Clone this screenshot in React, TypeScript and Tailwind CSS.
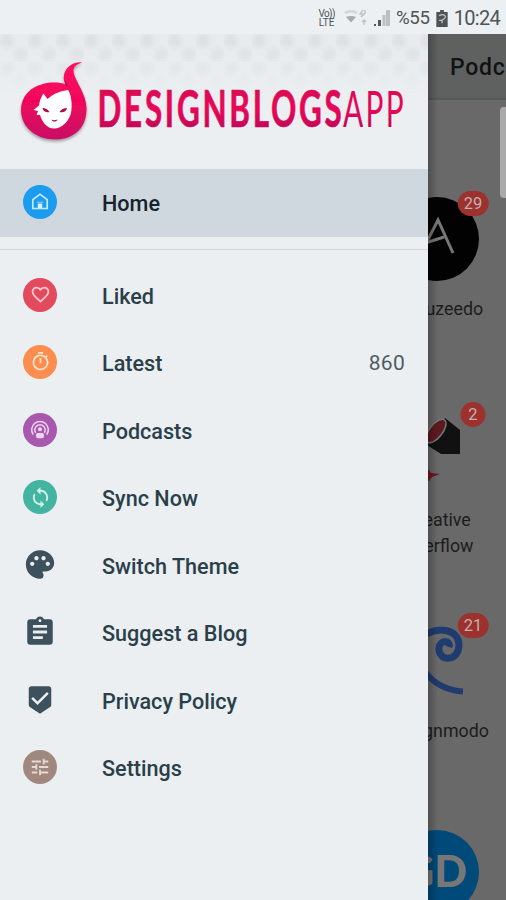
import type { ReactNode } from 'react';
import { MdAssignment, MdBeenhere, MdFavoriteBorder, MdOutlineTimer, MdPalette, MdSync, MdTune } from 'react-icons/md';
import clsx from 'clsx';

const HomeIcon = () => (
  <svg width="20" height="20" viewBox="0 0 20 20" fill="none" stroke="#c5e9fd" strokeWidth="1.7">
    <path d="M2.8 16.500V7.600L10 2.400l7.200 5.200V16.500Z" />
    <path d="M7.800 16.500v-5h4.400v5" fill="#d5f0ff" stroke="none" />
    <path d="M6.800 10.200h6.400" strokeWidth="1" opacity="0.7" />
  </svg>
);

const PodcastIcon = () => (
  <svg width="20" height="20" viewBox="0 0 20 20" fill="none" stroke="#efd3f1" strokeWidth="1.500" strokeLinecap="round">
    <path d="M3 14.200a8.300 8.300 0 1 1 14 0" />
    <path d="M5.400 12.300a5.200 5.200 0 1 1 9.200 0" />
    <circle cx="10" cy="9.300" r="2" fill="#efd3f1" stroke="none" />
    <rect x="6.800" y="13.800" width="6.400" height="3.600" rx="1" fill="#efd3f1" />
  </svg>
);

interface MenuItem {
  label: string;
  icon: ReactNode;
  color?: string;
  count?: number;
}

const menu: MenuItem[] = [
  { label: 'Liked', icon: <MdFavoriteBorder size={21} />, color: 'bg-[#e44a5e] text-[#fbc9cf]' },
  { label: 'Latest', icon: <MdOutlineTimer size={21} className="-mt-[2px]" />, color: 'bg-[#fb8d4e] text-[#ffe3cf]', count: 860 },
  { label: 'Podcasts', icon: <PodcastIcon />, color: 'bg-[#a859ae]' },
  { label: 'Sync Now', icon: <MdSync size={23} />, color: 'bg-[#43b4a1] text-[#d0f1ea]' },
  { label: 'Switch Theme', icon: <MdPalette size={37} /> },
  { label: 'Suggest a Blog', icon: <MdAssignment size={34} /> },
  { label: 'Privacy Policy', icon: <MdBeenhere size={30} /> },
  { label: 'Settings', icon: <MdTune size={22} />, color: 'bg-[#a1887f] text-[#e6d8d2]' },
];

const MenuRow = ({ item, active }: { item: MenuItem; active?: boolean }) => (
  <li className={clsx('flex h-[67.5px] items-center pr-[23px] pl-[23px]', active && 'bg-[#cfd8df]')}>
    <span className={clsx('mb-px flex size-[34px] shrink-0 items-center justify-center rounded-full', item.color ?? 'text-[#3c515c]')}>
      {item.icon}
    </span>
    <span className={clsx('ml-[45px] flex-1 pt-[3px] text-[21.6px] font-medium', active ? 'text-[#14242c]' : 'text-[#2a3f49]')}>
      {item.label}
    </span>
    {item.count && <span className="pt-[2px] text-[21px] tracking-[0.3px] text-[#4f5c63]">{item.count}</span>}
  </li>
);

const Logo = () => (
  <svg width="428" height="135" viewBox="0 34 428 135" className="relative block">
    <defs>
      <linearGradient id="pink" x1="0" y1="0" x2="0" y2="1">
        <stop offset="0" stopColor="#ff0a5c" />
        <stop offset="0.5" stopColor="#f0065c" />
        <stop offset="1" stopColor="#c80f66" />
      </linearGradient>
      <linearGradient id="word" gradientUnits="userSpaceOnUse" x1="0" y1="89" x2="0" y2="128">
        <stop offset="0" stopColor="#d90c52" />
        <stop offset="0.5" stopColor="#ea0656" />
        <stop offset="1" stopColor="#c2085a" />
      </linearGradient>
      <filter id="shade" x="-20%" y="-20%" width="140%" height="140%">
        <feDropShadow dx="0" dy="2" stdDeviation="1.5" floodOpacity="0.35" />
      </filter>
    </defs>
    <g filter="url(#shade)">
      <path
        d="M82 62.500C75 61.500 66 66 64 75C63.300 79 64 81.500 65.500 84.500C60 82 50 82 43 84C30 87 21 97 21 110C21 128 37 140 56 139.500C76 139 87 126 86.500 108C86 93 75 81 73.500 72C73 67 76 64.500 82 62.500Z"
        fill="url(#pink)"
      />
      <path d="M64.500 78C65 84 70 86 71 91C71 88 68.500 86.500 65.500 84.500Z" fill="#b00843" />
    </g>
    <path
      d="M43.500 93.500L47.500 99C54 93 61 91 68 90C71.500 95 72.500 105 71 113C69 121 62 128.500 54 128.500C47 128.500 42 122 40 115L36.500 115L38 111L33.500 110L39 105.500C39.500 101 41 97 43.500 93.500Z"
      fill="#fff"
    />
    <path
      d="M42.500 108C45 108 48 109.500 49.500 112C46 113 43 111 42.500 108ZM59.500 112C61 109.500 64 108 67 108C66.500 111.500 63 113 59.500 112ZM51.500 119.500C53 120.500 55 120.500 57.500 119.500C56.500 122.300 52.500 122.300 51.500 119.500Z"
      fill="#a90d50"
    />
    <g fill="url(#word)" fontFamily="Lato, sans-serif" fontSize="51">
      <text
        x="97.500"
        y="126.500"
        fontWeight="700"
        letterSpacing="4.500"
        textLength="247"
        lengthAdjust="spacingAndGlyphs"
        stroke="url(#word)"
        strokeWidth="0.7"
        strokeLinejoin="round"
      >
        DESIGNBLOGS
      </text>
      <text x="343" y="126.500" fontWeight="400" letterSpacing="4" textLength="63" lengthAdjust="spacingAndGlyphs">
        APP
      </text>
    </g>
  </svg>
);

const StatusBar = () => (
  <header className="flex h-[34px] items-center justify-end bg-[#ecf0f3] pt-[2px] pr-[6px] text-[#505355]">
    <div className="mr-[8px] flex flex-col items-center text-[10px] leading-[9px]">
      <span className="tracking-[-0.6px]">Vo))</span>
      <span>LTE</span>
    </div>
    <svg width="25" height="18" viewBox="0 0 25 18" fill="none" className="mr-[5px]">
      <path d="M1 3q7-4 14 0l-2 2q-5-3-10 0Z" fill="#d2d5d7" />
      <path d="M3 8q5-2 10 0L8 13.500Z" fill="#a6aaad" />
      <path d="M20 1l-3 4h4l-3 3M21 11v5m-2-3l2-2 2 2M22 1v4" stroke="#c0c4c6" strokeWidth="1.500" />
    </svg>
    <svg width="18" height="18" viewBox="0 0 18 18" className="mr-[5px]">
      <path d="M1 15h2v2H1ZM5 11h3v6H5Z" fill="#55595b" />
      <path d="M9.500 6h3v11h-3ZM13 1h4v16h-4Z" fill="#bcc0c3" />
    </svg>
    <span className="text-[18.7px] tracking-[-0.3px]">%55</span>
    <svg width="12" height="17" viewBox="0 0 12 18" className="mx-[6px]">
      <path d="M4 0h4v2h4v16H0V2h4Z" fill="#505355" />
      <path d="M3 6q4-2 6 0t-3 5H3m3-1v4" fill="none" stroke="#c3c7ca" strokeWidth="1.300" />
    </svg>
    <span className="text-[20px] tracking-[-0.7px]">10:24</span>
  </header>
);

const Feed = ({ name, count, children }: { name: string; count?: number; children: ReactNode }) => (
  <div className="flex h-[211px] shrink-0 flex-col items-center">
    <div className="relative size-[84px] shrink-0">
      {children}
      {count && (
        <span className="absolute -top-[6px] left-[78px] flex h-[25px] min-w-[25px] -translate-x-1/2 items-center justify-center rounded-full bg-[#9c312e] px-[6px] pt-px text-[16.5px] text-[#c2b0ae]">
          {count}
        </span>
      )}
    </div>
    <p className="mt-[15px] ml-[3px] w-[100px] text-center text-[17.8px] leading-[26px] text-[#1c1c1c]">{name}</p>
  </div>
);

const App = () => (
  <div className="flex h-[900px] w-[506px] flex-col overflow-hidden bg-[#ecf0f3] font-[Roboto,sans-serif]">
    <StatusBar />
    <div className="flex min-h-0 flex-1">
      <aside className="w-[428px] shrink-0 bg-[#ebeff2]">
        <div className="relative h-[135px]">
          {/* soft checker texture that fades out behind the logo */}
          <div className="absolute inset-x-0 top-0 h-[60px] bg-[#e7ebed] bg-[radial-gradient(circle_at_25%_25%,#dde1e3_10%,transparent_34%),radial-gradient(circle_at_75%_75%,#dde1e3_10%,transparent_34%)] bg-[size:28px_28px] mask-b-from-20%" />
          <Logo />
        </div>
        <ul>
          <MenuRow active item={{ label: 'Home', icon: <HomeIcon />, color: 'bg-[#1b9cee]' }} />
        </ul>
        <hr className="my-3 border-[#d2d6d9]" />
        <ul>
          {menu.map(item => (
            <MenuRow key={item.label} item={item} />
          ))}
        </ul>
      </aside>

      <main className="relative flex w-[78px] flex-col overflow-hidden bg-[#696969]">
        <div className="flex h-[66px] shrink-0 items-center border-b-2 border-[#565757] bg-[#5f6161] pt-[4px] pl-[22px] text-[23px] font-medium tracking-[0.7px] text-[#111313]">
          Podcasts
        </div>
        <div className="-ml-[60px] flex w-[138px] flex-col pt-[97px]">
          <Feed name="Abduzeedo" count={29}>
            <svg viewBox="0 0 84 84">
              <circle cx="42" cy="42" r="42" fill="#020202" />
              <path d="M26 56L43 23L58 56M30 46L49 40" fill="none" stroke="#777" strokeWidth="3" />
            </svg>
          </Feed>
          <Feed name="Creative Overflow" count={2}>
            <svg viewBox="0 0 84 84">
              <path d="M50 10L65 22V46H46L32 37Z" fill="#111" />
              <ellipse cx="41" cy="23" rx="14" ry="6.500" transform="rotate(-52 41 23)" fill="#5c1a20" stroke="#777" strokeWidth="1.500" />
              <path d="M24 62H34L36 65L45 66L37 69L34 73H24Z" fill="#6b1721" />
            </svg>
          </Feed>
          <Feed name="Designmodo" count={21}>
            <svg viewBox="0 0 84 84" fill="none" stroke="#203c6e" strokeWidth="7">
              <path d="M28 17C44 6 64 11 64 26C64 43 43 43 44 29C45 20 56 21 54 28" />
              <path d="M28 50Q42 71 68 72.500" strokeWidth="6" />
            </svg>
          </Feed>
          <Feed name="Web Designer Depot">
            <svg viewBox="0 0 84 84">
              <circle cx="42" cy="42" r="42" fill="#004a79" />
              <text x="8" y="57" fontFamily="Lato, sans-serif" fontWeight="900" fontSize="44" textLength="64" lengthAdjust="spacingAndGlyphs" fill="#777">
                GD
              </text>
            </svg>
          </Feed>
        </div>
        <div className="absolute inset-y-0 left-0 w-[10px] bg-gradient-to-r from-black/25 to-transparent" />
        <div className="absolute top-[73px] right-0 h-[91px] w-[6px] rounded-l-[4px] bg-[#aaa]" />
      </main>
    </div>
  </div>
);

export default App;
